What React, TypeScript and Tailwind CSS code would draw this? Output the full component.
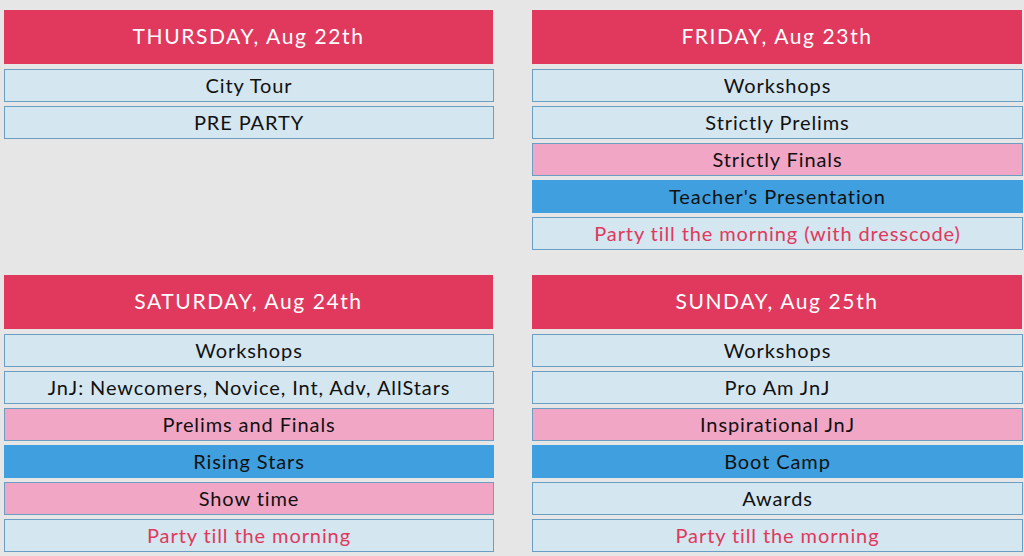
import React from "react";

type Kind = "light" | "pink" | "blue" | "party";
type Item = { t: string; k: Kind };
type Day = { title: string; items: Item[] };

const days: Day[] = [
  { title: "THURSDAY, Aug 22th", items: [{ t: "City Tour", k: "light" }, { t: "PRE PARTY", k: "light" }] },
  {
    title: "FRIDAY, Aug 23th",
    items: [
      { t: "Workshops", k: "light" },
      { t: "Strictly Prelims", k: "light" },
      { t: "Strictly Finals", k: "pink" },
      { t: "Teacher's Presentation", k: "blue" },
      { t: "Party till the morning (with dresscode)", k: "party" },
    ],
  },
  {
    title: "SATURDAY, Aug 24th",
    items: [
      { t: "Workshops", k: "light" },
      { t: "JnJ: Newcomers, Novice, Int, Adv, AllStars", k: "light" },
      { t: "Prelims and Finals", k: "pink" },
      { t: "Rising Stars", k: "blue" },
      { t: "Show time", k: "pink" },
      { t: "Party till the morning", k: "party" },
    ],
  },
  {
    title: "SUNDAY, Aug 25th",
    items: [
      { t: "Workshops", k: "light" },
      { t: "Pro Am JnJ", k: "light" },
      { t: "Inspirational JnJ", k: "pink" },
      { t: "Boot Camp", k: "blue" },
      { t: "Awards", k: "light" },
      { t: "Party till the morning", k: "party" },
    ],
  },
];

const kindClass: Record<Kind, string> = {
  light: "bg-[#d4e6ef] border-[#6a9fc3] text-[#111]",
  pink: "bg-[#f2a6c6] border-[#6a9fc3] text-[#111]",
  blue: "bg-[#409fdf] border-[#409fdf] text-[#111]",
  party: "bg-[#d4e6ef] border-[#6a9fc3] text-[#e0395d]",
};

function DayCard({ day }: { day: Day }) {
  return (
    <div className="flex flex-col">
      <div className="h-[54px] bg-[#e0395d] text-white text-[21px] tracking-[1.6px] leading-none flex items-center justify-center mr-[1px] pb-[4px]">
        {day.title}
      </div>
      <div className="flex flex-col gap-[4px] mt-[5px]">
        {day.items.map((it, i) => (
          <div
            key={i}
            className={`h-[33px] border flex items-center justify-center text-[20px] tracking-[0.9px] leading-none pb-[2px] ${kindClass[it.k]}`}
          >
            {it.t}
          </div>
        ))}
      </div>
    </div>
  );
}

export default function App() {
  return (
    <div
      className="w-[1024px] h-[556px] overflow-hidden bg-[#e6e6e6]"
      style={{ fontFamily: "Lato, 'Open Sans', sans-serif" }}
    >
      <div className="grid grid-cols-[490px_491px] gap-x-[38px] gap-y-[25px] pl-[4px] pt-[10px] items-start">
        {days.map((d, i) => (
          <DayCard key={i} day={d} />
        ))}
      </div>
    </div>
  );
}
